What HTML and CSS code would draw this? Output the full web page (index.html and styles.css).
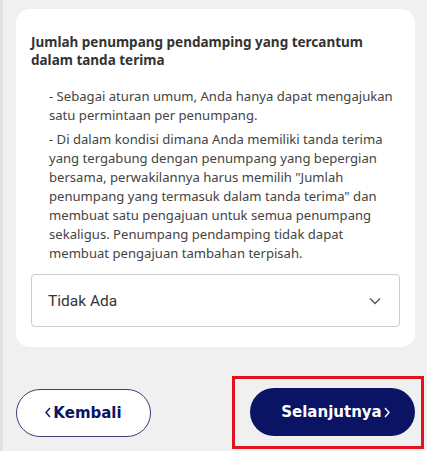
FILE: index.html
```html
<!DOCTYPE html>
<html lang="id">
<head>
    <meta charset="UTF-8">
    <meta name="viewport" content="width=device-width, initial-scale=1.0">
    <title>Pengajuan</title>
    <link rel="stylesheet" href="styles.css">
</head>
<body>
    <div class="page">
        <div class="card">
            <h2 class="title">Jumlah penumpang pendamping yang tercantum dalam tanda terima</h2>
            <div class="notes">
                <p>- Sebagai aturan umum, Anda hanya dapat mengajukan satu permintaan per penumpang.</p>
                <p>- Di dalam kondisi dimana Anda memiliki tanda terima yang tergabung dengan penumpang yang bepergian bersama, perwakilannya harus memilih "Jumlah penumpang yang termasuk dalam tanda terima" dan membuat satu pengajuan untuk semua penumpang sekaligus. Penumpang pendamping tidak dapat membuat pengajuan tambahan terpisah.</p>
            </div>
            <div class="select">
                <span>Tidak Ada</span>
                <svg width="12" height="8" viewBox="0 0 12 8"><polyline points="1,1.5 6,6.5 11,1.5" fill="none" stroke="#555" stroke-width="1.3"/></svg>
            </div>
        </div>
        <div class="actions">
            <button class="btn btn-back">
                <svg class="chev" width="6" height="11" viewBox="0 0 6 11"><polyline points="5,1 1,5.5 5,10" fill="none" stroke="currentColor" stroke-width="1.4"/></svg>
                Kembali
            </button>
            <div class="highlight">
                <button class="btn btn-next">
                    Selanjutnya
                    <svg class="chev" width="6" height="11" viewBox="0 0 6 11"><polyline points="1,1 5,5.5 1,10" fill="none" stroke="currentColor" stroke-width="1.4"/></svg>
                </button>
            </div>
        </div>
    </div>
</body>
</html>
```

FILE: styles.css
```css
:root{
    --cor_fundo : #f0f0f0;
    --cor_navy : #0b1464;
    --cor_texto : #333;
}

body {
    margin: 0;
    background-color: var(--cor_fundo);
    font-family: "Noto Sans", sans-serif;
    border-left: 3px solid #e2e2e2;
    min-height: 451px;
    box-sizing: border-box;
}

.page {
    padding: 9px 0 0 13px;
}

.card {
    background-color: #fff;
    border-radius: 14px;
    margin-right: 12px;
    padding: 24px 15px 20px;
}

.title {
    margin: 0;
    font-size: 13.5px;
    line-height: 18px;
    font-weight: 700;
    color: var(--cor_texto);
}

.notes {
    margin-top: 18px;
    padding-left: 18px;
    color: #444;
    font-size: 13.1px;
    line-height: 19px;
}

.notes p {
    margin: 0 0 5px;
}

.notes p:last-child {
    margin-bottom: 0;
}

.select {
    margin-top: 11px;
    height: 53px;
    border: 1px solid #ccc;
    border-radius: 4px;
    box-sizing: border-box;
    display: flex;
    align-items: center;
    justify-content: space-between;
    padding: 0 18px 0 16px;
    font-family: Roboto, sans-serif;
    font-size: 15.5px;
    color: #333;
}

.actions {
    display: flex;
    justify-content: space-between;
    align-items: center;
    margin-top: 29px;
    padding-right: 3px;
}

.btn {
    height: 48px;
    border-radius: 24px;
    font-family: "DejaVu Sans", Verdana, sans-serif;
    font-weight: 700;
    font-size: 15px;
    display: flex;
    align-items: center;
    justify-content: center;
    gap: 2px;
    box-sizing: border-box;
    cursor: pointer;
}

.btn-back {
    width: 135px;
    background-color: #fff;
    border: 1.5px solid #3a4070;
    color: var(--cor_navy);
}

.btn-next {
    width: 165px;
    background-color: var(--cor_navy);
    border: none;
    color: #fff;
    padding-left: 12px;
}

.highlight {
    border: 3px solid #e3121f;
    padding: 9px 6px 10px 15px;
}
```
